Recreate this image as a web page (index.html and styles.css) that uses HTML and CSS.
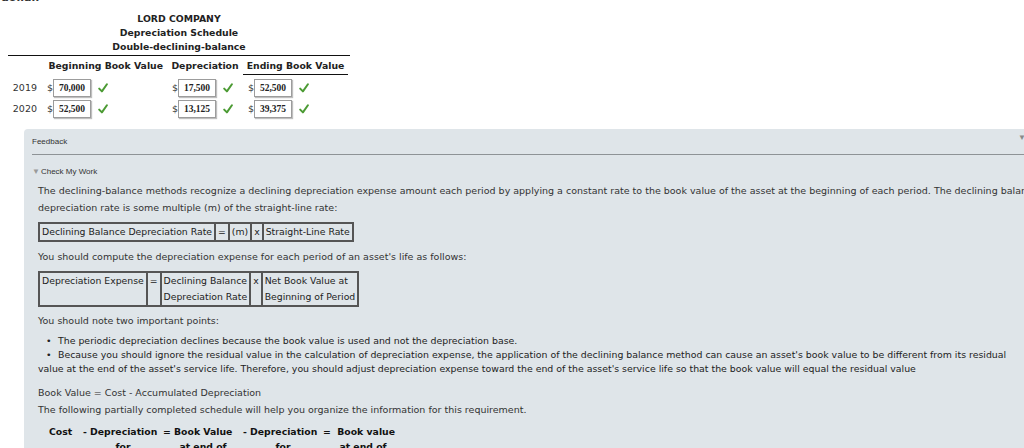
FILE: index.html
```html
<!DOCTYPE html>
<html>
<head>
<meta charset="utf-8">
<link rel="stylesheet" href="styles.css">
</head>
<body>
<div class="cut">dollar.</div>
<section class="schedule">
  <div class="title">
    <div>LORD COMPANY</div>
    <div>Depreciation Schedule</div>
    <div>Double-declining-balance</div>
  </div>
  <div class="grid">
    <div class="h"></div>
    <div class="h h-beg">Beginning Book Value</div>
    <div class="h h-dep">Depreciation</div>
    <div class="h h-end">Ending Book Value</div>

    <div class="yr">2019</div>
    <div class="cell c-beg"><span class="dol">$</span><span class="box">70,000</span><svg class="chk" viewBox="0 0 10 10"><path d="M1.2 5.6 L3.9 8.4 L8.9 1.2"/></svg></div>
    <div class="cell c-dep"><span class="dol">$</span><span class="box">17,500</span><svg class="chk" viewBox="0 0 10 10"><path d="M1.2 5.6 L3.9 8.4 L8.9 1.2"/></svg></div>
    <div class="cell c-end"><span class="dol">$</span><span class="box">52,500</span><svg class="chk" viewBox="0 0 10 10"><path d="M1.2 5.6 L3.9 8.4 L8.9 1.2"/></svg></div>

    <div class="yr">2020</div>
    <div class="cell c-beg"><span class="dol">$</span><span class="box">52,500</span><svg class="chk" viewBox="0 0 10 10"><path d="M1.2 5.6 L3.9 8.4 L8.9 1.2"/></svg></div>
    <div class="cell c-dep"><span class="dol">$</span><span class="box">13,125</span><svg class="chk" viewBox="0 0 10 10"><path d="M1.2 5.6 L3.9 8.4 L8.9 1.2"/></svg></div>
    <div class="cell c-end"><span class="dol">$</span><span class="box">39,375</span><svg class="chk" viewBox="0 0 10 10"><path d="M1.2 5.6 L3.9 8.4 L8.9 1.2"/></svg></div>
  </div>
</section>

<section class="feedback">
  <div class="fb-head"><span>Feedback</span><span class="fb-tri">&#9660;</span></div>
  <div class="cmw"><span class="cmw-tri">&#9660;</span>Check My Work</div>
  <div class="content">
    <p class="p1">The declining-balance methods recognize a declining depreciation expense amount each period by applying a constant rate to the book value of the asset at the beginning of each period. The declining balance<br>depreciation rate is some multiple (m) of the straight-line rate:</p>
    <table class="ftab t1">
      <tr><td>Declining Balance Depreciation Rate</td><td>=</td><td>(m)</td><td>x</td><td>Straight-Line Rate</td></tr>
    </table>
    <p class="p2">You should compute the depreciation expense for each period of an asset's life as follows:</p>
    <table class="ftab t2">
      <tr><td>Depreciation Expense</td><td>=</td><td>Declining Balance<br>Depreciation Rate</td><td>x</td><td>Net Book Value at<br>Beginning of Period</td></tr>
    </table>
    <p class="p3">You should note two important points:</p>
    <ul class="pts">
      <li>The periodic depreciation declines because the book value is used and not the depreciation base.</li>
      <li>Because you should ignore the residual value in the calculation of depreciation expense, the application of the declining balance method can cause an asset's book value to be different from its residual<br>value at the end of the asset's service life. Therefore, you should adjust depreciation expense toward the end of the asset's service life so that the book value will equal the residual value</li>
    </ul>
    <p class="p4">Book Value = Cost - Accumulated Depreciation<br>The following partially completed schedule will help you organize the information for this requirement.</p>
    <div class="sched">
      <span class="s1">Cost</span><span class="s2">- Depreciation</span><span class="s3">= Book Value</span><span class="s4">- Depreciation</span><span class="s5">=&nbsp; Book value</span>
      <span class="s1 sub"></span><span class="s2 sub">for</span><span class="s3 sub">at end of</span><span class="s4 sub">for</span><span class="s5 sub">at end of</span>
    </div>
  </div>
</section>
</body>
</html>
```

FILE: styles.css
```css
html, body {
  margin: 0;
  padding: 0;
}
body {
  width: 1024px;
  height: 448px;
  overflow: hidden;
  background: #fff;
  font-family: "DejaVu Sans", Verdana, sans-serif;
  color: #222;
}
.cut {
  font-weight: bold;
  font-size: 11px;
  line-height: 12px;
  margin-top: -8px;
  padding-left: 1px;
  color: #333;
}
.schedule {
  width: 342px;
  margin: 8px 0 0 8px;
}
.title {
  text-align: center;
  font-weight: bold;
  font-size: 9.3px;
  line-height: 14px;
  padding-bottom: 1px;
  border-bottom: 1px solid #111;
}
.grid {
  display: grid;
  grid-template-columns: 34px 126px 74px 108px;
}
.h {
  font-weight: bold;
  font-size: 9.3px;
  line-height: 14px;
  padding: 3px 0 1px;
  border-bottom: 1px solid transparent;
  margin-bottom: 2px;
  white-space: nowrap;
}
.h-beg { text-align: right; padding-right: 5px; }
.h-dep { text-align: center; }
.h-end { text-align: center; border-bottom-color: #111; margin-left: 1px; margin-right: 2px; }
.yr {
  height: 21px;
  display: flex;
  align-items: center;
  justify-content: flex-end;
  padding-right: 5px;
  font-size: 9.5px;
  color: #333;
}
.cell {
  height: 21px;
  display: flex;
  align-items: center;
  font-size: 9.5px;
  color: #333;
}
.c-beg { padding-left: 5px; }
.c-dep { padding-left: 4px; }
.c-end { padding-left: 6px; }
.dol { width: 5px; }
.box {
  display: inline-flex;
  align-items: center;
  justify-content: center;
  width: 36px;
  height: 16px;
  margin-left: 1px;
  background: #fff;
  border: 1px solid #9c9c9c;
  box-shadow: 1px 1px 1px rgba(0,0,0,0.25);
  font-family: "Liberation Serif", "Times New Roman", serif;
  font-weight: bold;
  font-size: 9.5px;
  color: #222;
}
.chk {
  width: 10px;
  height: 10px;
  margin-left: 7px;
}
.chk path {
  fill: none;
  stroke: #4c9b34;
  stroke-width: 2;
  stroke-linecap: round;
  stroke-linejoin: round;
}

.feedback {
  margin: 10px 0 0 24px;
  width: 1010px;
  height: 330px;
  background: #dfe5e9;
  border-radius: 4px 0 0 0;
}
.fb-head {
  margin: 0 8px;
  display: flex;
  justify-content: space-between;
  padding: 8px 0 7px;
  border-bottom: 1px solid #8e9396;
  font-family: "Liberation Sans", Arial, sans-serif;
  font-size: 8px;
  line-height: 10px;
  color: #333;
}
.fb-tri {
  font-size: 8px;
  line-height: 8px;
  color: #8a8a8a;
  margin-top: -3px;
}
.cmw {
  margin: 0 8px;
  padding-top: 12px;
  font-family: "Liberation Sans", Arial, sans-serif;
  font-size: 8px;
  line-height: 10px;
  color: #333;
}
.cmw-tri {
  font-size: 8px;
  color: #9a9a9a;
  margin-right: 1px;
}
.content {
  padding-left: 14px;
  font-size: 9.5px;
  color: #333;
}
.content p {
  margin: 0;
  line-height: 17px;
  white-space: nowrap;
}
.p1 { margin-top: 5px !important; }
.p2 { margin-top: 6px !important; }
.p3 { margin-top: 5px !important; }
.p4 { margin-top: 8px !important; }
.ftab {
  border-collapse: separate;
  border-spacing: 0;
  border: 1px solid #555;
  margin-top: 6px;
  font-size: 9.3px;
  color: #222;
}
.ftab td {
  border: 1px solid #555;
  padding: 0 2px;
  line-height: 16px;
  vertical-align: top;
  white-space: nowrap;
}
.pts {
  list-style: none;
  margin: 5px 0 0;
  padding: 0;
  line-height: 14px;
  white-space: nowrap;
  color: #222;
  font-size: 9.4px;
}
.pts li::before {
  content: "\2022";
  display: inline-block;
  margin-left: 8px;
  width: 12px;
}
.sched {
  margin-top: 6px;
  margin-left: 11px;
  display: grid;
  grid-template-columns: 34px 80px 80px 80px 80px;
  font-weight: bold;
  font-size: 9.3px;
  line-height: 15px;
  color: #111;
  white-space: nowrap;
}
.sched .sub { text-align: center; }
```
